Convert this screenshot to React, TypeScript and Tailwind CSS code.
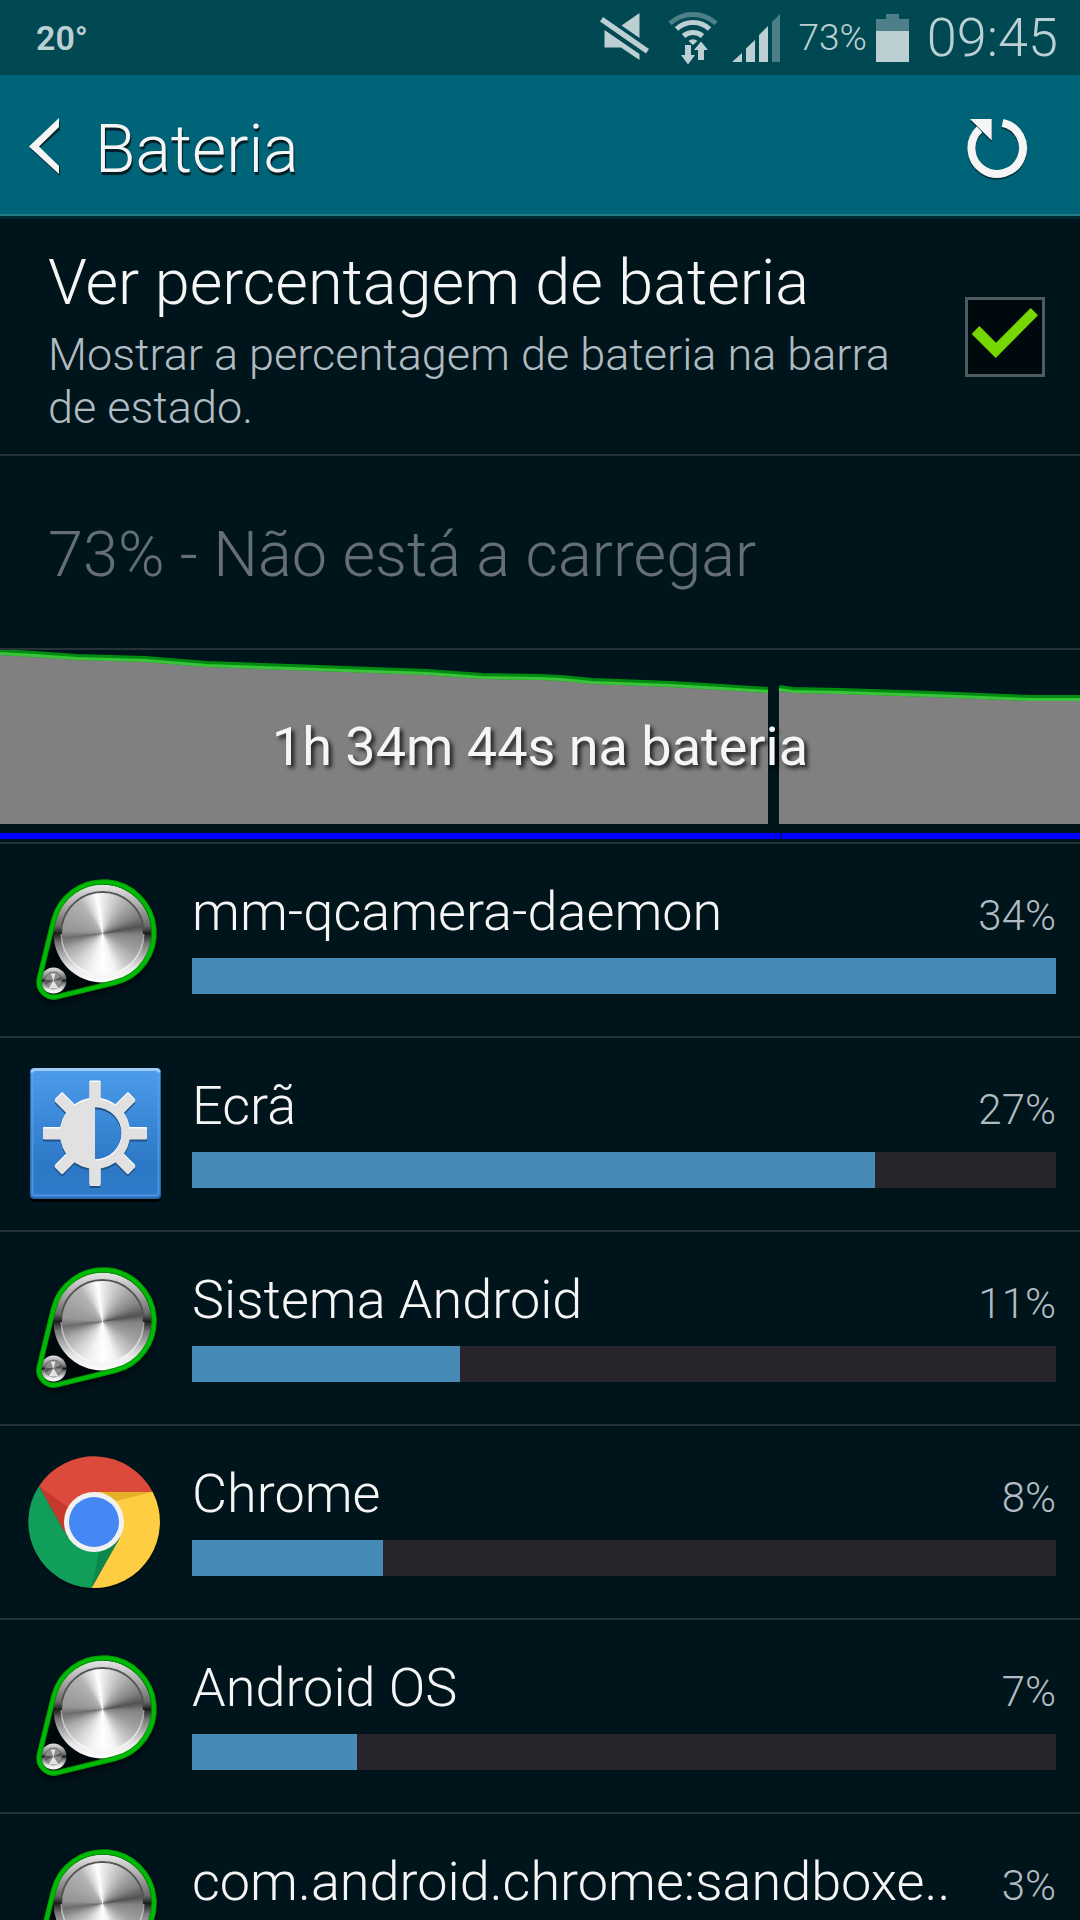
import { useId, useState } from "react";
import type { ReactNode } from "react";

interface UsageItem {
  name: string;
  percent: number;
  icon: ReactNode;
}

// Battery level over time, split where the device was off
const LEVEL_BEFORE =
  "0,2 34,4 77,7 145,9 207,14 290,17 372,20 427,22 482,26 540,27 561,28 592,31 671,34 705,36 768,40";
const LEVEL_AFTER = "779,38 793,40 840,41 932,44 1031,48 1080,48";

function MuteIcon() {
  return (
    <svg className="h-[50px] w-[50px]" viewBox="0 0 50 50" fill="#bccfd3">
      <path d="M39.500 0v25L21.500 12.500Z" />
      <path d="M4.500 17v17.500H21L39.500 47v-6Z" />
      <path d="M3 4 49 36l-3 4.500L0 8.500Z" />
    </svg>
  );
}

function WifiIcon() {
  return (
    <svg className="h-[54px] w-[50px]" viewBox="0 0 50 54" fill="none">
      <path d="M2 12.500a34 34 0 0 1 46 0" stroke="#4c7f88" strokeWidth="5" />
      <path d="M8.500 18a24 24 0 0 1 33 0" stroke="#bccfd3" strokeWidth="5" />
      <path d="M15.500 25a14.500 14.500 0 0 1 19 0" stroke="#bccfd3" strokeWidth="5" />
      <path d="M20.500 30a7 7 0 0 1 9 0L25 34Z" fill="#bccfd3" />
      <path d="M17 34h6v10h4l-7 9.500L13 44h4Z" fill="#bccfd3" />
      <path d="M33 30.500 40 39h-4v10h-6V39h-4Z" fill="#bccfd3" />
    </svg>
  );
}

function SignalIcon() {
  return (
    <svg className="h-12 w-12" viewBox="0 0 48 48" fill="#bccfd3">
      <path d="M0 48 10 39v9Z" />
      <path d="M14 34.500 23 26v22h-9Z" />
      <path d="M27 21 36 12v36h-9Z" />
      <path d="M40 8 48 0v48h-8Z" fill="#4c7f88" />
    </svg>
  );
}

function BatteryIcon() {
  return (
    <svg className="h-12 w-[33px]" viewBox="0 0 33 48">
      <path d="M10 0h13v5h10v12H0V5h10Z" fill="#4c7f88" />
      <path d="M0 17h33v31H0Z" fill="#bccfd3" />
    </svg>
  );
}

function BackIcon() {
  return (
    <svg className="h-[60px] w-[32px]" viewBox="0 0 32 60">
      <path d="M31 4v9L10 31.500 31 50v9L1 31.500Z" fill="#00262e" />
      <path d="M30 1v9L10 29.500 30 49v8L0 29.500Z" fill="#f5f5f5" />
    </svg>
  );
}

function RefreshIcon() {
  return (
    <svg className="h-16 w-16" viewBox="0 0 64 64">
      <path d="M37.500 8.500a25.800 25.800 0 1 1-23 6.500" fill="none" stroke="#00333d" strokeWidth="8" />
      <path d="M5 5h22v21.500Z" fill="#00333d" />
      <path d="M37.500 6.800a25.800 25.800 0 1 1-23 6.500" fill="none" stroke="#f5f5f5" strokeWidth="8" />
      <path d="M5 3h21.700v21.500Z" fill="#f5f5f5" />
    </svg>
  );
}

function PulleyIcon() {
  const id = useId();
  return (
    <svg className="h-36 w-36" viewBox="0 0 144 144">
      <defs>
        <linearGradient id={`${id}rim`} x1="0" y1="0" x2="0" y2="1">
          <stop offset="0" stopColor="#e6e6e6" />
          <stop offset="0.250" stopColor="#a0a0a0" />
          <stop offset="0.420" stopColor="#6a6a6a" />
          <stop offset="0.500" stopColor="#1c1c1c" />
          <stop offset="0.600" stopColor="#777777" />
          <stop offset="0.850" stopColor="#e8e8e8" />
          <stop offset="1" stopColor="#ffffff" />
        </linearGradient>
        <filter id={`${id}soft`} x="-20%" y="-20%" width="140%" height="140%">
          <feGaussianBlur stdDeviation="3" />
        </filter>
      </defs>
      <path
        d="M31.500 52.900A51 51 0 1 1 93.100 114.500L35.600 128.600A15 15 0 0 1 17.400 110.400Z"
        transform="translate(0 4)"
        fill="#000000"
        stroke="#000000"
        strokeWidth="5"
        opacity="0.600"
        filter={`url(#${id}soft)`}
      />
      <circle cx="80.500" cy="65.500" r="49" fill={`url(#${id}rim)`} />
      <path d="M39.500 66a41 41 0 0 0 82 0" fill="none" stroke="#ffffff" strokeOpacity="0.500" strokeWidth="2" />
      <path d="M39.500 59a41.500 41.500 0 0 1 82 0" fill="none" stroke="#555555" strokeWidth="2" />
      <foreignObject x="40" y="25" width="81" height="81">
        <div className="h-full w-full rounded-full bg-[conic-gradient(#ececec_0deg,#a8a8a8_40deg,#858585_62deg,#525252_80deg,#848484_92deg,#a0a0a0_118deg,#c8c8c8_142deg,#f4f4f4_162deg,#ffffff_180deg,#f0f0f0_200deg,#d2d2d2_222deg,#a8a8a8_245deg,#6c6c6c_263deg,#969696_275deg,#a4a4a4_300deg,#b4b4b4_325deg,#e0e0e0_340deg,#ffffff_352deg,#ececec_360deg)]" />
      </foreignObject>
      <circle cx="31.500" cy="112.500" r="13" fill={`url(#${id}rim)`} />
      <circle cx="31.500" cy="112.500" r="8.500" fill="#8c8c8c" stroke="#5a5a5a" strokeOpacity="0.600" />
      <path d="m31.500 112.500-3-7h5ZM31.500 112.500l-5 8h10Z" fill="#e4e4e4" />
      <path d="m31.500 112.500 8-4v4ZM31.500 112.500l-8 4v-5Z" fill="#555555" />
      <path
        d="M31.500 52.900A51 51 0 1 1 93.100 114.500L35.600 128.600A15 15 0 0 1 17.400 110.400Z"
        fill="none"
        stroke="#059405"
        strokeWidth="5.500"
      />
      <path
        d="M31.500 52.900A51 51 0 1 1 93.100 114.500L35.600 128.600A15 15 0 0 1 17.400 110.400Z"
        fill="none"
        stroke="#00bb05"
        strokeWidth="3.500"
      />
    </svg>
  );
}

function BrightnessShape() {
  return (
    <>
      <path d="M73 36.500a35 35 0 1 0 0 70 35 35 0 1 0 0-70Zm0 8.300a26.700 26.700 0 0 1 0 53.400Z" fillRule="evenodd" />
      {[0, 45, 90, 135, 180, 225, 270, 315].map((angle) => (
        <rect key={angle} x="67.500" y="19.500" width="11" height="19" rx="1" transform={`rotate(${angle} 73 71.500)`} />
      ))}
    </>
  );
}

function DisplayIcon() {
  const id = useId();
  return (
    <svg className="h-36 w-36" viewBox="0 0 144 144">
      <defs>
        <linearGradient id={`${id}tile`} x1="0" y1="0" x2="0" y2="1">
          <stop offset="0" stopColor="#4d9bec" />
          <stop offset="0.750" stopColor="#2c78c6" />
          <stop offset="1" stopColor="#2f7bcb" />
        </linearGradient>
      </defs>
      <rect x="8" y="8" width="131" height="132" rx="5" fill="#000000" />
      <rect x="8" y="6" width="131" height="131" rx="4" fill="#2868ad" />
      <rect x="9" y="7" width="129" height="128" rx="4" fill={`url(#${id}tile)`} />
      <rect x="10.500" y="8.500" width="126" height="125" rx="3" fill="none" stroke="#5ba3ee" strokeOpacity="0.600" strokeWidth="2" />
      <path d="M10 10.500q0-3 3-3h121q3 0 3 3" fill="none" stroke="#9ccbfa" strokeWidth="3" />
      <g fill="#1f5288" transform="translate(0 2.500)">
        <BrightnessShape />
      </g>
      <g fill="#ffffff" transform="translate(0 -1)">
        <BrightnessShape />
      </g>
      <g fill="#e1e1e1" transform="translate(0 0.500)">
        <BrightnessShape />
      </g>
    </svg>
  );
}

function ChromeIcon() {
  return (
    <svg className="h-36 w-36" viewBox="0 0 144 144">
      <circle cx="72" cy="74" r="66" fill="#000000" opacity="0.500" />
      <path d="M17 36A66 66 0 0 1 130.700 42H72v30L45 86Z" fill="#db4a3b" />
      <path d="M17 36 46 87l26-15 26 15-28.500 51A66 66 0 0 1 17 36Z" fill="#119e5a" />
      <path d="M130.700 42A66 66 0 0 1 69.500 138L98 87 72 72V42Z" fill="#ffcd41" />
      <path d="m17 36 30 22-5 24Z" fill="#b92f24" opacity="0.600" />
      <path d="M80 42h50.700L94 51Z" fill="#e2aa25" opacity="0.850" />
      <path d="m98 88-28.500 50L77 101Z" fill="#0a7a43" opacity="0.600" />
      <circle cx="72" cy="72" r="30" fill="#f1f1f1" />
      <circle cx="72" cy="72" r="25" fill="#4587f4" />
    </svg>
  );
}

const USAGE: UsageItem[] = [
  { name: "mm-qcamera-daemon", percent: 34, icon: <PulleyIcon /> },
  { name: "Ecrã", percent: 27, icon: <DisplayIcon /> },
  { name: "Sistema Android", percent: 11, icon: <PulleyIcon /> },
  { name: "Chrome", percent: 8, icon: <ChromeIcon /> },
  { name: "Android OS", percent: 7, icon: <PulleyIcon /> },
  { name: "com.android.chrome:sandboxe..", percent: 3, icon: <PulleyIcon /> },
];

// Bars are relative to the biggest consumer, using unrounded shares
const BAR_WIDTHS = [100, 79, 31, 22.1, 19.1, 9];

function StatusBar() {
  return (
    <div className="flex h-[75px] shrink-0 items-center justify-between bg-[#004852] pr-[22px] pl-9 text-[#bccfd3]">
      <span className="text-[34px] leading-none font-semibold">20°</span>
      <div className="flex items-center">
        <MuteIcon />
        <div className="ml-[18px] flex items-center gap-[14px]">
          <WifiIcon />
          <SignalIcon />
        </div>
        <span className="ml-[18px] text-[37px] font-light">73%</span>
        <div className="mr-[18px] ml-[9px] flex">
          <BatteryIcon />
        </div>
        <span className="text-[54px] leading-none font-light">09:45</span>
      </div>
    </div>
  );
}

function HistoryChart() {
  return (
    <section className="relative border-b-2 border-[#263238]">
      <svg className="block h-48 w-full" viewBox="0 0 1080 192" preserveAspectRatio="none">
        <polygon points={`${LEVEL_BEFORE} 768,174 0,174`} fill="#808080" />
        <polygon points={`${LEVEL_AFTER} 1080,174 779,174`} fill="#808080" />
        <g fill="none" stroke="#008c10" strokeWidth="6">
          <polyline points={LEVEL_BEFORE} />
          <polyline points={LEVEL_AFTER} />
        </g>
        <g fill="none" stroke="#3cc33c" strokeWidth="3" transform="translate(0 1.5)">
          <polyline points={LEVEL_BEFORE} />
          <polyline points={LEVEL_AFTER} />
        </g>
        <path d="M0 183h780v6H0ZM781 183h299v6H781Z" fill="#0000ff" />
      </svg>
      <p className="absolute inset-0 flex items-center justify-center text-[54px] [text-shadow:3px_3px_4px_rgba(0,0,0,0.8)]">
        1h 34m 44s na bateria
      </p>
    </section>
  );
}

function UsageRow({ item, width }: { item: UsageItem; width: number }) {
  return (
    <li className="flex h-[194px] shrink-0 items-center gap-[26px] border-b-2 border-[#263238] pr-6 pl-[22px]">
      <div className="shrink-0">{item.icon}</div>
      <div className="min-w-0 flex-1 pb-1.5">
        <div className="flex items-baseline justify-between">
          <span className="text-[54px] leading-[64px] font-light whitespace-nowrap">{item.name}</span>
          <span className="text-[42px] leading-[56px] font-light text-[#b0bbc2]">{item.percent}%</span>
        </div>
        <div
          className="mt-3.5 h-9 bg-[#28252c]"
          role="progressbar"
          aria-label={item.name}
          aria-valuenow={item.percent}
        >
          <div className="h-full bg-[#468ab8]" style={{ width: `${width}%` }} />
        </div>
      </div>
    </li>
  );
}

export default function App() {
  const [showPercent, setShowPercent] = useState(true);

  return (
    <div className="flex h-screen flex-col overflow-hidden bg-[#00141b] font-['Roboto',sans-serif] text-[#f5f5f5]">
      <StatusBar />

      <header className="flex h-[141px] shrink-0 items-center justify-between border-b-2 border-[#247b86] bg-[#006478] pr-[51px] pl-[29px]">
        <div className="flex items-center gap-[34px]">
          <button type="button" aria-label="Voltar" className="pt-1">
            <BackIcon />
          </button>
          <h1 className="pt-2.5 text-[66px] leading-[76px] font-light [text-shadow:1px_3px_1px_rgba(0,20,27,0.9)]">
            Bateria
          </h1>
        </div>
        <button type="button" aria-label="Actualizar" className="pt-1.5">
          <RefreshIcon />
        </button>
      </header>

      <main className="flex min-h-0 flex-1 flex-col overflow-hidden border-t-3 border-[#00282f]">
        <label className="flex shrink-0 items-center justify-between border-b-2 border-[#263238] pr-[35px] pl-12">
          <span className="block max-w-[860px] pt-7 pb-5">
            <span className="block text-[63px] leading-[72px] font-light">Ver percentagem de bateria</span>
            <span className="mt-[9px] block text-[45px] leading-[53px] font-light text-[#b0bbc2]">
              Mostrar a percentagem de bateria na barra de estado.
            </span>
          </span>
          <span className="relative block h-20 w-20 shrink-0">
            <input
              type="checkbox"
              checked={showPercent}
              onChange={(e) => setShowPercent(e.target.checked)}
              className="block h-20 w-20 appearance-none border-3 border-[#4d5c60] bg-[#000a0e]"
            />
            {showPercent && (
              <svg className="pointer-events-none absolute inset-0 h-20 w-20" viewBox="0 0 80 80">
                <path d="M6.700 37 14.300 29 31 45.700 65.700 11 73 18.300 30.700 61Z" fill="#77d700" />
              </svg>
            )}
          </span>
        </label>

        <div className="flex h-[194px] shrink-0 items-center border-b-2 border-[#263238] px-12 pt-1.5">
          <p className="text-[63px] leading-[72px] font-light text-[#656f73]">73% - Não está a carregar</p>
        </div>

        <HistoryChart />

        <ul className="flex flex-col">
          {USAGE.map((item, i) => (
            <UsageRow key={item.name} item={item} width={BAR_WIDTHS[i]} />
          ))}
        </ul>
      </main>
    </div>
  );
}
